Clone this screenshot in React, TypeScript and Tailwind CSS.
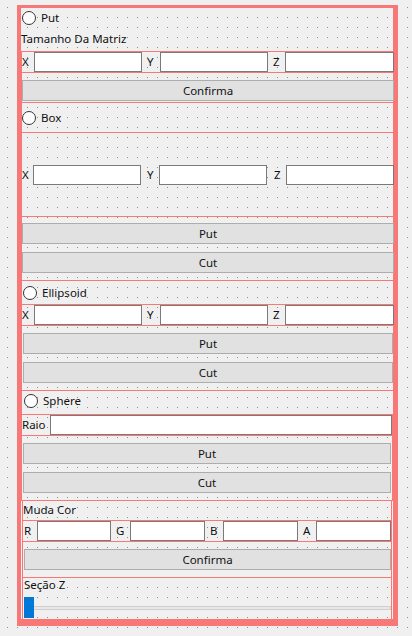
import React from 'react'

const font = { fontFamily: '"Segoe UI", "Noto Sans", "Liberation Sans", sans-serif' }

const Radio = ({ label, className = '' }: { label: string; className?: string }) => (
  <div className={`flex items-center ${className}`}>
    <span className="w-[14px] h-[14px] rounded-full border border-[#333] bg-white shrink-0" />
    <span className="ml-[5px]">{label}</span>
  </div>
)

const Input = ({ w }: { w: string }) => (
  <div className={`${w} h-[20px] bg-white border border-[#7a7a7a] shrink-0`} />
)

const Btn = ({ label }: { label: string }) => (
  <div className="h-[21px] bg-[#e1e1e1] border border-[#adadad] flex items-center justify-center">
    {label}
  </div>
)

const Lbl = ({ text, w, pl }: { text: string; w: string; pl: string }) => (
  <div className={`${w} ${pl} shrink-0 h-[20px] flex items-center`}>{text}</div>
)

export default function App() {
  return (
    <div
      className="w-[412px] h-[636px] bg-[#f0f0f0] bg-[radial-gradient(circle_at_0.5px_0.5px,#8f8f8f_0.65px,transparent_0.75px)] bg-[length:10px_10px] bg-[position:7px_7px] pt-[5px] pl-[17px] text-[11.5px] text-[#111] overflow-hidden"
      style={font}
    >
      <div className="w-[381px] h-[621px] border-[#f87878] border-l-4 border-t-[3px] border-r-[5px] border-b-[7px] flex flex-col">
        {/* Put + Tamanho */}
        <div className="h-[43px] w-[374px] flex flex-col">
          <Radio label="Put" className="h-[20px] ml-px" />
          <div className="h-[22px] flex items-center">Tamanho Da Matriz</div>
        </div>

        <div className="w-[374px] h-[22px] border border-[#f87878] flex items-center">
          <Lbl text="X" w="w-[12px]" pl="pl-0" />
          <Input w="w-[108px]" />
          <Lbl text="Y" w="w-[18px]" pl="pl-[5px]" />
          <Input w="w-[108px]" />
          <Lbl text="Z" w="w-[17px]" pl="pl-[5px]" />
          <Input w="w-[109px]" />
        </div>

        <div className="w-[374px] h-[30px] border-x border-b border-[#f87878] pt-[7px]">
          <Btn label="Confirma" />
        </div>

        {/* Box */}
        <div className="w-[374px] h-[30px] border-x border-b border-[#f87878] flex items-center">
          <Radio label="Box" />
        </div>

        <div className="w-[374px] h-[84px] border-x border-b border-[#f87878] flex items-center">
          <Lbl text="X" w="w-[11px]" pl="pl-0" />
          <Input w="w-[108px]" />
          <Lbl text="Y" w="w-[18px]" pl="pl-[6px]" />
          <Input w="w-[108px]" />
          <Lbl text="Z" w="w-[19px]" pl="pl-[7px]" />
          <Input w="w-[108px]" />
        </div>

        <div className="w-[374px] h-[64px] border-x border-b border-[#f87878] pt-[6px] flex flex-col gap-[8px]">
          <Btn label="Put" />
          <Btn label="Cut" />
        </div>

        {/* Ellipsoid */}
        <div className="w-[374px] h-[24px] border-x border-b border-[#f87878] flex items-center">
          <Radio label="Ellipsoid" className="ml-px" />
        </div>

        <div className="w-[374px] h-[21px] border-x border-b border-[#f87878] flex items-center">
          <Lbl text="X" w="w-[12px]" pl="pl-0" />
          <Input w="w-[108px]" />
          <Lbl text="Y" w="w-[18px]" pl="pl-[5px]" />
          <Input w="w-[108px]" />
          <Lbl text="Z" w="w-[17px]" pl="pl-[5px]" />
          <Input w="w-[109px]" />
        </div>

        <div className="w-[374px] h-[65px] border-x border-b border-[#f87878] pt-[7px] px-px flex flex-col gap-[8px]">
          <Btn label="Put" />
          <Btn label="Cut" />
        </div>

        {/* Sphere */}
        <div className="w-[374px] h-[24px] border-x border-b border-[#f87878] flex items-center pb-[3px]">
          <Radio label="Sphere" className="ml-[2px]" />
        </div>

        <div className="w-[372px] h-[21px] border-x border-b border-[#f87878] flex items-center">
          <Lbl text="Raio" w="w-[28px]" pl="pl-0" />
          <Input w="w-[342px]" />
        </div>

        <div className="w-[372px] h-[65px] border-x border-b border-[#f87878] pt-[7px] px-px flex flex-col gap-[8px]">
          <Btn label="Put" />
          <Btn label="Cut" />
        </div>

        {/* Muda Cor */}
        <div className="ml-px w-[370px] h-[20px] border-x border-b border-[#f87878] flex items-center pb-[2px]">
          Muda Cor
        </div>

        <div className="ml-px w-[370px] h-[21px] border-x border-b border-[#f87878] flex items-center">
          <Lbl text="R" w="w-[14px]" pl="pl-px" />
          <Input w="w-[74px]" />
          <Lbl text="G" w="w-[19px]" pl="pl-[5px]" />
          <Input w="w-[75px]" />
          <Lbl text="B" w="w-[18px]" pl="pl-[5px]" />
          <Input w="w-[75px]" />
          <Lbl text="A" w="w-[18px]" pl="pl-[5px]" />
          <Input w="w-[75px]" />
        </div>

        <div className="ml-px w-[370px] h-[36px] border-x border-b border-[#f87878] pt-[7px] pl-px">
          <Btn label="Confirma" />
        </div>

        {/* Seção Z */}
        <div className="ml-px w-[370px] flex-1 border-x border-[#f87878] flex flex-col pl-px">
          <div className="h-[14px] flex items-center">Seção Z</div>
          <div className="relative h-[21px] mt-[5px] flex items-center">
            <div className="w-full h-[4px] bg-[#e7e7e7] border border-[#d0d0d0]" />
            <div className="absolute left-0 top-0 w-[10px] h-[21px] bg-[#0078d7]" />
          </div>
        </div>
      </div>
    </div>
  )
}
